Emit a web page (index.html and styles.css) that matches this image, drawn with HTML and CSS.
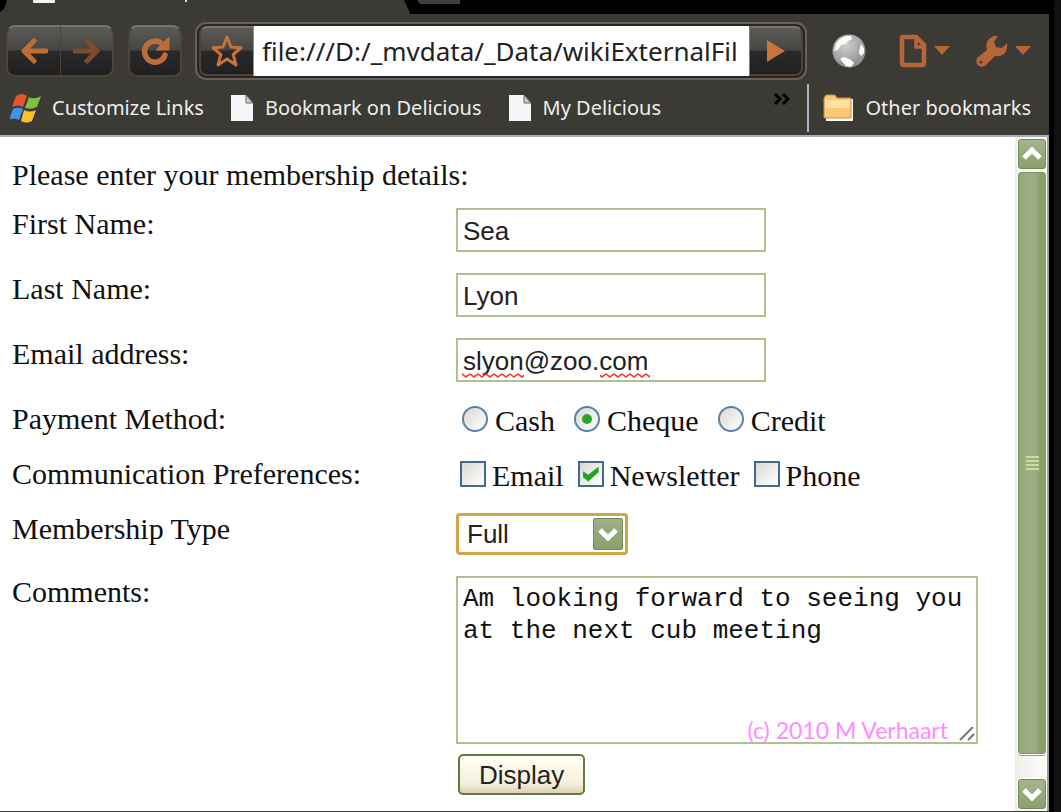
FILE: index.html
```html
<!DOCTYPE html>
<html lang="en">
<head>
<meta charset="utf-8">
<title>Membership</title>
<link rel="stylesheet" href="styles.css">
</head>
<body>
<div class="window">
  <div class="tabstrip">
    <div class="tab">
      <svg class="tab-art" viewBox="0 0 400 4" width="400" height="4" aria-hidden="true"><path d="M28 0h22v2q0 1-1 1H29q-1 0-1-1z" fill="#f4f5f6"/><path d="M180 0h2v2h-2z" fill="#d8d8d4"/></svg>
    </div>
    <div class="new-tab"></div>
  </div>

  <div class="toolbar">
    <div class="nav-group">
      <button class="tool-btn" type="button" aria-label="Back"><svg width="28" height="26" viewBox="0 0 28 26"><path d="M26 13H4M14 3 4 13l10 10" fill="none" stroke="#c06c38" stroke-width="5" stroke-linecap="round" stroke-linejoin="round"/></svg></button>
      <button class="tool-btn dim" type="button" aria-label="Forward"><svg width="28" height="26" viewBox="0 0 28 26"><path d="M2 13h22M14 3l10 10-10 10" fill="none" stroke="#7d4a2b" stroke-width="5" stroke-linecap="round" stroke-linejoin="round"/></svg></button>
    </div>
    <button class="tool-btn reload" type="button" aria-label="Reload"><svg width="32" height="32" viewBox="0 0 32 32"><path d="M26 20A10.500 10.500 0 1 1 22 8" fill="none" stroke="#c06c38" stroke-width="5.500" stroke-linecap="round"/><path d="M30 2v13H17z" fill="#c06c38" stroke="#c06c38" stroke-linejoin="round"/></svg></button>
    <div class="address">
      <button class="tool-btn star" type="button" aria-label="Bookmark this page"><svg width="34" height="34" viewBox="0 0 34 34"><path d="m17 3 4 10 10 .8-7.800 6.700L26 31l-9-6-9 6 2.800-10.500L3 13.800 13 13z" fill="none" stroke="#c5723c" stroke-width="3" stroke-linejoin="round"/></svg></button>
      <input class="url" type="text" aria-label="Address" value="file:///D:/_mvdata/_Data/wikiExternalFil">
      <button class="tool-btn go" type="button" aria-label="Go"><svg width="20" height="24" viewBox="0 0 20 24"><path d="M1 1v22l18-11z" fill="#c8743b"/></svg></button>
    </div>
    <div class="tools">
      <button class="plain-btn" type="button" aria-label="Web">
        <svg width="36" height="36" viewBox="0 0 36 36"><defs><radialGradient id="globe" cx=".4" cy=".3" r=".8"><stop offset="0" stop-color="#d0d0d0"/><stop offset="1" stop-color="#858585"/></radialGradient></defs><circle cx="18" cy="18" r="16.500" fill="url(#globe)"/><path d="M5 11Q10 2 20 3l1 3-4 2-2 3-5 1-3 5-4 1zM30 11l3 4v5l-3 3-2-3 1-6zM9 26l3-2 4 1 4 2 3 3-3 4-5-1z" fill="#fbfbfb"/></svg>
      </button>
      <button class="plain-btn menu" type="button" aria-label="Page menu">
        <svg width="28" height="34" viewBox="0 0 28 34"><path d="M3 4q0-1 1-1h13l8 8v18q0 2-2 2H5q-2 0-2-2z" fill="none" stroke="#b5673a" stroke-width="4.500"/><path d="M17 4v9h8" fill="none" stroke="#b5673a" stroke-width="3.500"/></svg>
        <svg width="16" height="10" viewBox="0 0 16 10"><path d="M0 0h16L8 9z" fill="#b5673a"/></svg>
      </button>
      <button class="plain-btn menu" type="button" aria-label="Tools menu">
        <svg width="33" height="34" viewBox="0 0 33 34"><path d="M23 2 19 8l2 5 6 1 5-5q1 7-3 11-4 3-9 2l-9 9q-3 3-7 1-4-3-2-8l10-8q-2-7 2-11 4-4 9-3z" fill="#b5673a"/><circle cx="6" cy="28" r="1.500" fill="#3b3a35"/></svg>
        <svg width="16" height="10" viewBox="0 0 16 10"><path d="M0 0h16L8 9z" fill="#b5673a"/></svg>
      </button>
    </div>
  </div>

  <nav class="bookmarks">
    <a class="bookmark" href="#"><svg width="32" height="32" viewBox="0 0 32 32"><path d="M6 4q6-4 11 0l-4 11q-5-3-11 0z" fill="#e2572b"/><path d="M19 5q5 3 12-1l-4 11q-6 3-12 1z" fill="#7cc142"/><path d="M3 17q5-3 10 0L9 28q-5-3-10 0z" fill="#3d95e8"/><path d="M14 18q6 3 12 0l-4 11q-6 3-11 0z" fill="#fbc02d"/></svg>Customize Links</a>
    <a class="bookmark" href="#"><svg width="25" height="28" viewBox="0 0 25 28"><path d="M1 1h15l7 8v18H1z" fill="#f5f6f7"/><path d="M16 1v8h7z" fill="#c9cccf" stroke="#63656a"/></svg>Bookmark on Delicious</a>
    <a class="bookmark" href="#"><svg width="25" height="28" viewBox="0 0 25 28"><path d="M1 1h15l7 8v18H1z" fill="#f5f6f7"/><path d="M16 1v8h7z" fill="#c9cccf" stroke="#63656a"/></svg>My Delicious</a>
    <button class="plain-btn more" type="button" aria-label="More bookmarks"><svg width="18" height="12" viewBox="0 0 18 12"><path d="m2 1 5 5-5 5M10 1l5 5-5 5" fill="none" stroke="#000" stroke-width="3"/></svg></button>
    <a class="bookmark other" href="#"><svg width="32" height="28" viewBox="0 0 32 28"><path d="M4 5h26v22H3z" fill="#fff"/><path d="M1 4 3 1h9l2 3h14v20H1z" fill="#fbc876" stroke="#d08a35"/><path d="M2 6h25v8H2z" fill="#ffe0a0"/></svg>Other bookmarks</a>
  </nav>

  <div class="viewport">
    <main class="page">
      <form class="form">
        <p class="intro">Please enter your membership details:</p>
        <div class="rows">
          <label for="first">First Name:</label>
          <div><input class="field" id="first" type="text" value="Sea"></div>
          <label for="last">Last Name:</label>
          <div><input class="field" id="last" type="text" value="Lyon"></div>
          <label for="email">Email address:</label>
          <div class="spell">
            <input class="field" id="email" type="text" value="slyon@zoo.com" spellcheck="false">
            <svg class="squiggle" width="190" height="5" viewBox="0 0 190 5" aria-hidden="true"><defs><pattern id="wave" width="8" height="5" patternUnits="userSpaceOnUse"><path d="m-1 1 1 0 4 3 4-3 1 0" fill="none" stroke="#ff3b3b" stroke-width="1.700"/></pattern></defs><path d="M0 0h62v5H0zM138 0h50v5h-50z" fill="url(#wave)"/></svg>
          </div>
          <span id="pay">Payment Method:</span>
          <div class="choices radios" role="radiogroup" aria-labelledby="pay">
            <label class="choice radio"><input type="radio" name="pay">Cash</label>
            <label class="choice radio"><input type="radio" name="pay" checked>Cheque</label>
            <label class="choice radio"><input type="radio" name="pay">Credit</label>
          </div>
          <span id="comm">Communication Preferences:</span>
          <div class="choices" role="group" aria-labelledby="comm">
            <label class="choice"><input type="checkbox">Email</label>
            <label class="choice"><input type="checkbox" checked>Newsletter</label>
            <label class="choice"><input type="checkbox">Phone</label>
          </div>
          <label for="type">Membership Type</label>
          <div class="select">
            <select id="type"><option>Full</option></select>
            <span class="select-arrow"><svg width="20" height="14" viewBox="0 0 20 14"><path d="m2 3 8 8 8-8" fill="none" stroke="#fff" stroke-width="5"/></svg></span>
          </div>
          <label for="comments">Comments:</label>
          <div class="last-cell">
            <div class="comments">
              <textarea id="comments" spellcheck="false">Am looking forward to seeing you
at the next cub meeting</textarea>
              <span class="credit">(c) 2010 M Verhaart</span>
              <svg class="grip" width="16" height="14" viewBox="0 0 16 14" aria-hidden="true"><path d="M1 13 14 0M9 13l6-6" stroke="#777" stroke-width="2"/></svg>
            </div>
            <button class="display" type="button">Display</button>
          </div>
        </div>
      </form>
    </main>
    <div class="scrollbar">
      <button class="scroll-btn" type="button" aria-label="Scroll up"><svg width="20" height="14" viewBox="0 0 20 14"><path d="m2 11 8-8 8 8" fill="none" stroke="#fff" stroke-width="5"/></svg></button>
      <div class="thumb"><i></i><i></i><i></i><i></i></div>
      <button class="scroll-btn" type="button" aria-label="Scroll down"><svg width="20" height="14" viewBox="0 0 20 14"><path d="m2 3 8 8 8-8" fill="none" stroke="#fff" stroke-width="5"/></svg></button>
    </div>
  </div>
</div>
</body>
</html>
```

FILE: styles.css
```css
* { box-sizing: border-box; }
body { margin: 0; background: #111; }
svg { display: block; flex: none; }
button { font: inherit; cursor: pointer; }

.window {
  min-height: 100vh;
  margin-right: 7px;
  padding-bottom: 2px;
  border-right: 5px solid #000;
  background: #3b3a35;
  display: flex;
  flex-direction: column;
}

/* Tab strip */
.tabstrip { display: flex; height: 14px; background: #000; gap: 8px; overflow: hidden; }
.tab {
  width: 410px;
  padding-left: 5px;
  background: #3b3a35;
  clip-path: polygon(7px 0, 404px 0, 409px 11px, 410px 14px, 0 14px, 0 12px, 4px 9px);
}
.new-tab { width: 42px; height: 4px; background: #3d3f43; border-bottom-left-radius: 8px; }

/* Toolbar */
.toolbar {
  display: flex;
  align-items: center;
  height: 74px;
  padding: 0 18px 0 6px;
}
.tool-btn {
  display: flex;
  align-items: center;
  justify-content: center;
  width: 54px;
  height: 52px;
  padding: 0;
  border: 2px solid #504139;
  border-top-color: #77756d;
  border-radius: 9px;
  background: linear-gradient(#5b5b56 0, #454642 48%, #292929 50%, #202020 100%);
}
.nav-group { display: flex; margin-right: 14px; }
.nav-group .tool-btn:first-child { border-radius: 9px 0 0 9px; border-right-width: 0; }
.nav-group .tool-btn:last-child { border-radius: 0 9px 9px 0; border-left-width: 1px; }
.reload { margin-right: 13px; }
.address {
  flex: 1;
  min-width: 0;
  display: flex;
  align-items: stretch;
  padding: 2px;
  border: 2px solid #66625a;
  border-radius: 11px;
  background: #2b2521;
}
.address .star { width: 54px; height: 50px; border-radius: 8px 0 0 8px; border-right: 0; }
.address .go { width: 54px; height: 50px; border-radius: 0 8px 8px 0; border-left: 1px solid #a07860; }
.url {
  flex: 1;
  min-width: 0;
  padding: 0 8px;
  border: 0;
  border-left: 1px solid #c08060;
  background: #fff;
  color: #222;
  font: 26px/50px "Noto Sans", "Open Sans", sans-serif;
}
.tools { display: flex; align-items: center; margin-left: 24px; gap: 25px; }
.plain-btn { display: flex; align-items: center; padding: 0; border: 0; background: none; }
.plain-btn:first-child { margin-right: 7px; }
.menu { gap: 7px; }

/* Bookmarks bar */
.bookmarks {
  display: flex;
  align-items: center;
  height: 49px;
  padding: 0 18px 8px 10px;
  gap: 26px;
  border-bottom: 2px solid #a9adb5;
}
.bookmark {
  display: flex;
  align-items: center;
  gap: 10px;
  color: #eee;
  font: 20px/28px "Noto Sans", "Open Sans", sans-serif;
  text-decoration: none;
  white-space: nowrap;
}
.more { margin: 0 -10px 18px auto; }
.other { height: 48px; padding-left: 14px; border-left: 2px solid #a5b1c0; }

/* Page */
.viewport { flex: 1; display: flex; background: #fff; }
.page { flex: 1; min-width: 0; padding: 22px 12px 16px; }
.form { color: #111; font: 30px/32px "Liberation Serif", "Times New Roman", serif; }
.intro { margin: 0 0 17px; }
.rows {
  display: grid;
  grid-template-columns: 444fr 547fr;
  row-gap: 21px;
  align-items: start;
}
.field {
  display: block;
  width: 310px;
  height: 44px;
  padding: 2px 5px 0;
  border: 2px solid #afc18f;
  background: #fff;
  color: #222;
  font: 26px/32px "Liberation Sans", Arial, sans-serif;
}
.spell { position: relative; }
.squiggle { position: absolute; left: 6px; top: 35px; }

.choices { display: flex; gap: 14px; height: 34px; padding-left: 4px; }
.radios { gap: 17px; }
.choice { display: flex; align-items: center; gap: 6px; white-space: nowrap; padding-top: 2px; }
.choice input {
  appearance: none;
  display: flex;
  align-items: center;
  justify-content: center;
  flex: none;
  width: 26px;
  height: 26px;
  margin: 0 0 4px;
  border: 2px solid #3f6a94;
  background: linear-gradient(135deg, #d9dad2, #fff);
}
.radio input { border-radius: 50%; border-color: #5b81a6; margin-left: 2px; }
.radio { gap: 7px; }
.radio input:checked::before { content: ""; width: 10px; height: 10px; border-radius: 50%; background: #2ba52b; }
.choice input[type="checkbox"]:checked::before {
  content: "";
  width: 16px;
  height: 15px;
  background: #21a121;
  clip-path: polygon(0 30%, 35% 55%, 100% 0, 100% 36%, 35% 100%, 0 70%);
}

.select { position: relative; width: 172px; height: 42px; }
.select select {
  appearance: none;
  width: 100%;
  height: 42px;
  padding: 0 40px 0 8px;
  border: 3px solid #d2a545;
  border-radius: 4px;
  background: #fff;
  color: #222;
  font: 26px/32px "Liberation Sans", Arial, sans-serif;
}
.select-arrow {
  position: absolute;
  right: 5px;
  top: 5px;
  display: flex;
  align-items: center;
  justify-content: center;
  width: 30px;
  height: 32px;
  border: 1px solid #74885b;
  border-radius: 2px;
  background: linear-gradient(#9eb088, #8aa06b);
  pointer-events: none;
}

.last-cell { display: flex; flex-direction: column; align-items: flex-start; gap: 10px; }
.comments { position: relative; width: 522px; max-width: 100%; }
textarea {
  display: block;
  width: 100%;
  height: 168px;
  padding: 5px 0 0 5px;
  border: 2px solid #afc18f;
  background: #fff;
  color: #111;
  font: 26px/32px "Liberation Mono", "Courier New", monospace;
  resize: none;
  overflow: hidden;
}
.credit {
  position: absolute;
  right: 30px;
  bottom: 0;
  color: #ff8cff;
  font: 23px/28px Lato, sans-serif;
}
.grip { position: absolute; right: 3px; bottom: 3px; }
.display {
  height: 41px;
  margin-left: 2px;
  padding: 0 19px;
  border: 2px solid #5f7d40;
  border-radius: 5px;
  background: linear-gradient(#fffff4, #f5efdc 75%, #dfcdb4);
  color: #222;
  font: 26px/32px "Liberation Sans", Arial, sans-serif;
}

/* Scrollbar */
.scrollbar {
  display: flex;
  flex-direction: column;
  align-items: center;
  gap: 3px;
  width: 34px;
  padding: 2px;
  border-left: 2px solid #eff0e6;
  border-right: 2px solid #9ba18f;
  background: linear-gradient(90deg, #f0eeea, #fefefa);
}
.scroll-btn {
  display: flex;
  align-items: center;
  justify-content: center;
  width: 28px;
  height: 30px;
  padding: 0;
  border: 1px solid #74885b;
  border-radius: 3px;
  background: linear-gradient(#a3b68e, #8aa06b);
  box-shadow: 0 0 0 1px #fff;
}
.thumb {
  flex: 1;
  display: flex;
  flex-direction: column;
  align-items: center;
  justify-content: center;
  gap: 2px;
  width: 28px;
  margin-bottom: 22px;
  border: 1px solid #82966a;
  border-radius: 3px;
  background: linear-gradient(90deg, #8fa578, #9bae85 30%, #9bae85 60%, #8c9f66 85%);
  box-shadow: 0 0 0 1px #fff, 0 2px 0 #90a67a;
}
.thumb i { width: 13px; height: 2px; background: #c9dc9d; }
```
